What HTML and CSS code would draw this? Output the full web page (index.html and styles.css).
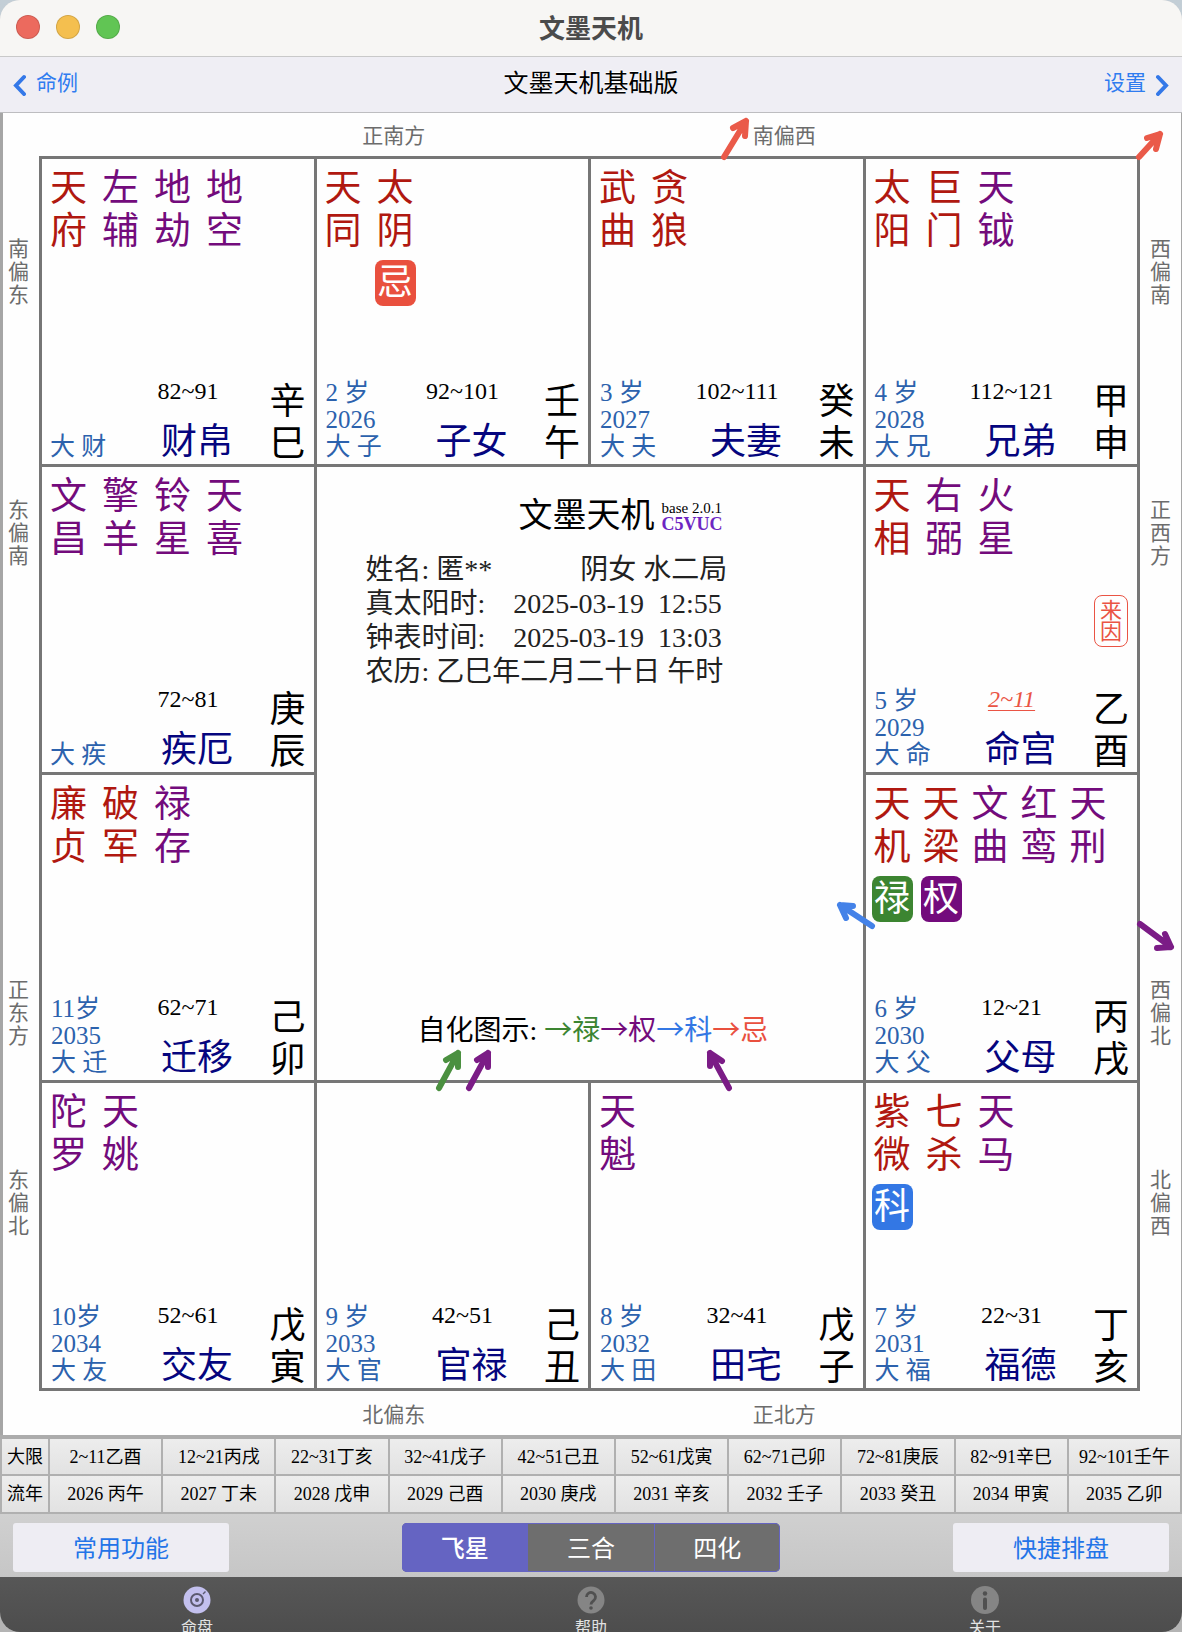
FILE: index.html
```html
<!DOCTYPE html>
<html lang="zh-CN">
<head>
<meta charset="utf-8">
<meta name="viewport" content="width=device-width, initial-scale=1">
<title>文墨天机</title>
<link rel="stylesheet" href="styles.css">
</head>
<body>
<div class="window">
  <header class="titlebar">
    <div class="lights"><span class="light close"></span><span class="light minimize"></span><span class="light expand"></span></div>
    <h1 class="window-title">文墨天机</h1>
  </header>

  <nav class="navbar">
    <a class="nav-link" href="#cases">
      <svg class="chevron" viewBox="0 0 16 22" aria-hidden="true"><path d="M12 3 4 11.500 12 20"/></svg>
      <span>命例</span>
    </a>
    <p class="nav-title">文墨天机基础版</p>
    <a class="nav-link nav-link-end" href="#settings">
      <span>设置</span>
      <svg class="chevron" viewBox="0 0 16 22" aria-hidden="true"><path d="M4 3 12 11.500 4 20"/></svg>
    </a>
  </nav>

  <main class="chart">
    <div class="edge edge-top"><span>正南方</span><span>南偏西</span></div>
    <div class="side side-left"><span>南偏东</span><span>东偏南</span><span>正东方</span><span>东偏北</span></div>

    <div class="board">
      <section class="palace">
        <ul class="stars"><li class="major">天府</li><li>左辅</li><li>地劫</li><li>地空</li></ul>
        <div class="foot">
          <div class="years years-short"><span>大 财</span></div>
          <div class="house"><span class="span">82~91</span><h2>财帛</h2></div>
          <div class="pillar"><span class="stem">辛巳</span></div>
        </div>
      </section>
      <section class="palace">
        <ul class="stars"><li class="major">天同</li><li class="major">太阴<b class="badge ji">忌</b></li></ul>
        <div class="foot">
          <div class="years"><span>2 岁</span><span>2026</span><span>大 子</span></div>
          <div class="house"><span class="span">92~101</span><h2>子女</h2></div>
          <div class="pillar"><span class="stem">壬午</span></div>
        </div>
      </section>
      <section class="palace">
        <ul class="stars"><li class="major">武曲</li><li class="major">贪狼</li></ul>
        <div class="foot">
          <div class="years"><span>3 岁</span><span>2027</span><span>大 夫</span></div>
          <div class="house"><span class="span">102~111</span><h2>夫妻</h2></div>
          <div class="pillar"><span class="stem">癸未</span></div>
        </div>
      </section>
      <section class="palace">
        <ul class="stars"><li class="major">太阳</li><li class="major">巨门</li><li>天钺</li></ul>
        <div class="foot">
          <div class="years"><span>4 岁</span><span>2028</span><span>大 兄</span></div>
          <div class="house"><span class="span">112~121</span><h2>兄弟</h2></div>
          <div class="pillar"><span class="stem">甲申</span></div>
        </div>
      </section>

      <section class="palace">
        <ul class="stars"><li>文昌</li><li>擎羊</li><li>铃星</li><li>天喜</li></ul>
        <div class="foot">
          <div class="years years-short"><span>大 疾</span></div>
          <div class="house"><span class="span">72~81</span><h2>疾厄</h2></div>
          <div class="pillar"><span class="stem">庚辰</span></div>
        </div>
      </section>
      <section class="center">
        <header class="brand">
          <h2 class="brand-name">文墨天机</h2>
          <p class="version">base 2.0.1<strong>C5VUC</strong></p>
        </header>
        <div class="profile">
          <p>姓名: 匿**<span class="pattern">阴女 水二局</span></p>
          <p>真太阳时:    2025-03-19  12:55</p>
          <p>钟表时间:    2025-03-19  13:03</p>
          <p>农历: 乙巳年二月二十日 午时</p>
        </div>
        <p class="legend">自化图示: <span class="c-lu">→禄</span><span class="c-quan">→权</span><span class="c-ke">→科</span><span class="c-ji">→忌</span></p>
      </section>
      <section class="palace">
        <ul class="stars"><li class="major">天相</li><li>右弼</li><li>火星</li></ul>
        <div class="foot">
          <div class="years"><span>5 岁</span><span>2029</span><span>大 命</span></div>
          <div class="house"><span class="span current">2~11</span><h2>命宫</h2></div>
          <div class="pillar"><span class="origin">来因</span><span class="stem">乙酉</span></div>
        </div>
      </section>

      <section class="palace">
        <ul class="stars"><li class="major">廉贞</li><li class="major">破军</li><li>禄存</li></ul>
        <div class="foot">
          <div class="years"><span>11岁</span><span>2035</span><span>大 迁</span></div>
          <div class="house"><span class="span">62~71</span><h2>迁移</h2></div>
          <div class="pillar"><span class="stem">己卯</span></div>
        </div>
      </section>
      <section class="palace">
        <ul class="stars stars-dense"><li class="major">天机<b class="badge lu">禄</b></li><li class="major">天梁<b class="badge quan">权</b></li><li>文曲</li><li>红鸾</li><li>天刑</li></ul>
        <div class="foot">
          <div class="years"><span>6 岁</span><span>2030</span><span>大 父</span></div>
          <div class="house"><span class="span">12~21</span><h2>父母</h2></div>
          <div class="pillar"><span class="stem">丙戌</span></div>
        </div>
      </section>

      <section class="palace">
        <ul class="stars"><li>陀罗</li><li>天姚</li></ul>
        <div class="foot">
          <div class="years"><span>10岁</span><span>2034</span><span>大 友</span></div>
          <div class="house"><span class="span">52~61</span><h2>交友</h2></div>
          <div class="pillar"><span class="stem">戊寅</span></div>
        </div>
      </section>
      <section class="palace">
        <ul class="stars"></ul>
        <div class="foot">
          <div class="years"><span>9 岁</span><span>2033</span><span>大 官</span></div>
          <div class="house"><span class="span">42~51</span><h2>官禄</h2></div>
          <div class="pillar"><span class="stem">己丑</span></div>
        </div>
      </section>
      <section class="palace">
        <ul class="stars"><li>天魁</li></ul>
        <div class="foot">
          <div class="years"><span>8 岁</span><span>2032</span><span>大 田</span></div>
          <div class="house"><span class="span">32~41</span><h2>田宅</h2></div>
          <div class="pillar"><span class="stem">戊子</span></div>
        </div>
      </section>
      <section class="palace">
        <ul class="stars"><li class="major">紫微<b class="badge ke">科</b></li><li class="major">七杀</li><li>天马</li></ul>
        <div class="foot">
          <div class="years"><span>7 岁</span><span>2031</span><span>大 福</span></div>
          <div class="house"><span class="span">22~31</span><h2>福德</h2></div>
          <div class="pillar"><span class="stem">丁亥</span></div>
        </div>
      </section>
    </div>

    <div class="side side-right"><span>西偏南</span><span>正西方</span><span>西偏北</span><span>北偏西</span></div>
    <div class="edge edge-bottom"><span>北偏东</span><span>正北方</span></div>

    <svg class="arrows" viewBox="3 113 1178 1322" preserveAspectRatio="none" aria-hidden="true">
      <g class="a-ji">
        <path d="M724 157 746 121M733 128 746 121 745 136"/>
        <path d="M1139 157 1160 134M1147 138 1160 134 1156 149"/>
      </g>
      <path class="a-ke" d="M872 926 840 905M853 906 840 905 846 918"/>
      <g class="a-quan">
        <path d="M1140 924 1171 947M1165 934 1171 947 1157 948"/>
        <path d="M469 1088 488 1053M477 1060 488 1053 488 1067"/>
        <path d="M729 1088 710 1053M710 1066 710 1053 722 1061"/>
      </g>
      <path class="a-lu" d="M439 1088 458 1053M446 1060 458 1053 458 1067"/>
    </svg>
  </main>

  <table class="periods">
    <tbody>
      <tr><th scope="row">大限</th><td>2~11乙酉</td><td>12~21丙戌</td><td>22~31丁亥</td><td>32~41戊子</td><td>42~51己丑</td><td>52~61戊寅</td><td>62~71己卯</td><td>72~81庚辰</td><td>82~91辛巳</td><td>92~101壬午</td></tr>
      <tr><th scope="row">流年</th><td>2026 丙午</td><td>2027 丁未</td><td>2028 戊申</td><td>2029 己酉</td><td>2030 庚戌</td><td>2031 辛亥</td><td>2032 壬子</td><td>2033 癸丑</td><td>2034 甲寅</td><td>2035 乙卯</td></tr>
    </tbody>
  </table>

  <div class="toolbar">
    <button class="action" type="button">常用功能</button>
    <div class="segments">
      <button class="segment active" type="button">飞星</button>
      <button class="segment" type="button">三合</button>
      <button class="segment" type="button">四化</button>
    </div>
    <button class="action" type="button">快捷排盘</button>
  </div>

  <footer class="tabbar">
    <a class="tab" href="#chart">
      <svg class="tab-icon" viewBox="0 0 28 28" aria-hidden="true"><circle cx="14" cy="14" r="13.500" fill="#c3c0ee"/><circle cx="14" cy="14" r="6" fill="none" stroke="#5c5a70" stroke-width="2"/><circle cx="14" cy="14" r="2" fill="#5c5a70"/><path d="M20 8l2.500-2.500" stroke="#5c5a70" stroke-width="1.500"/></svg>
      <span>命盘</span>
    </a>
    <a class="tab" href="#help">
      <svg class="tab-icon" viewBox="0 0 28 28" aria-hidden="true"><circle cx="14" cy="14" r="13.500" fill="#858585"/><path d="M9.500 11a4.500 4.500 0 1 1 7.200 3.600c-1.700 1.300-2.700 2-2.700 4" fill="none" stroke="#505050" stroke-width="2.800"/><circle cx="14" cy="22" r="1.800" fill="#505050"/></svg>
      <span>帮助</span>
    </a>
    <a class="tab" href="#about">
      <svg class="tab-icon" viewBox="0 0 28 28" aria-hidden="true"><circle cx="14" cy="14" r="14" fill="#858585"/><circle cx="14" cy="7.500" r="2.200" fill="#505050"/><path d="M14 13.500V22" stroke="#505050" stroke-width="4" stroke-linecap="round"/></svg>
      <span>关于</span>
    </a>
  </footer>
</div>
</body>
</html>
```
FILE: styles.css
```css
* { box-sizing: border-box; }

body, h1, h2, p, ul { margin: 0; padding: 0; }
h1, h2, strong, b { font-weight: inherit; }
a { color: inherit; text-decoration: none; }

body {
  background: linear-gradient(#c3ced6, #b4b4b4);
  font-family: "Liberation Serif", "Noto Sans CJK SC", serif;
}

.window {
  display: flex;
  flex-direction: column;
  height: 100vh;
  min-height: 1400px;
  overflow: hidden;
  border-radius: 20px;
  background: #cdcdcd;
}

/* window chrome */
.titlebar {
  flex: none;
  display: grid;
  grid-template-columns: 1fr auto 1fr;
  align-items: center;
  height: 57px;
  padding: 0 16px 2px;
  border-bottom: 1px solid #c9c9c9;
  background: #f7f6f4;
}
.lights { display: flex; gap: 16px; }
.light { width: 24px; height: 24px; border-radius: 50%; border: 1px solid #0002; }
.close { background: #ec6a5e; }
.minimize { background: #f4bf4f; }
.expand { background: #61c554; }
.window-title {
  color: #4b4b4b;
  font: bold 26px/34px "Noto Sans CJK SC", sans-serif;
}

.navbar {
  flex: none;
  display: grid;
  grid-template-columns: 1fr auto 1fr;
  align-items: center;
  height: 56px;
  padding: 0 12px 8px;
  border-bottom: 1px solid #bdbdc0;
  background: #efeef4;
  font-family: "Noto Sans CJK SC", sans-serif;
}
.nav-link {
  display: flex;
  align-items: center;
  gap: 8px;
  color: #2f7cf0;
  font-size: 21px;
  line-height: 30px;
}
.nav-link-end { justify-content: flex-end; }
.chevron { width: 16px; height: 22px; margin-top: 8px; fill: none; stroke: #3478e8; stroke-width: 4; stroke-linecap: round; }
.nav-title { font-size: 25px; line-height: 34px; text-shadow: 0 -1px 0 #fff; }

/* chart */
.chart {
  position: relative;
  flex: 1;
  display: grid;
  grid-template: 43px 1fr 44px / 36px 1fr 41px;
  border-left: 3px solid #a6a6a6;
  border-right: 1px solid #a6a6a6;
  background: #fefefe;
}
.edge {
  grid-column: 1 / -1;
  display: grid;
  grid-template-columns: repeat(3, 1fr);
  align-items: center;
  justify-items: center;
  padding-right: 6px;
  color: #6c6c6c;
  font-size: 21px;
  line-height: 24px;
}
.edge span { grid-area: 1 / 1 / 2 / 3; }
.edge span + span { grid-area: 1 / 2 / 2 / 4; }
.edge-top { padding-top: 2px; }
.edge-bottom { padding-top: 4px; }

.side {
  display: grid;
  grid-template-rows: 82fr auto 191fr auto 410fr auto 120fr auto 153fr;
  justify-content: center;
  color: #6c6c6c;
  font-size: 21px;
  line-height: 23px;
}
.side-left { padding-right: 5px; }
.side span { width: 21px; }
.side span:nth-child(1) { grid-row: 2; }
.side span:nth-child(2) { grid-row: 4; }
.side span:nth-child(3) { grid-row: 6; }
.side span:nth-child(4) { grid-row: 8; }

.board {
  display: grid;
  grid-template-columns: repeat(4, 1fr);
  grid-template-rows: repeat(4, 1fr);
  gap: 3px;
  padding: 3px;
  background: #767676;
}
.palace, .center {
  display: flex;
  flex-direction: column;
  justify-content: space-between;
  min-width: 0;
  background: #fefefe;
}
.palace { padding: 8px 8px 1px; }
.center { grid-area: 2 / 2 / 4 / 4; }

.stars {
  display: flex;
  gap: 15px;
  list-style: none;
  color: #730b7c;
  font-size: 37px;
  line-height: 43px;
}
.stars-dense { gap: 12px; }
.stars li { width: 37px; }
.major { color: #b01810; }
.badge {
  display: block;
  width: 41px;
  margin: 7px -2px 0;
  border-radius: 8px;
  color: #fff;
  font-size: 36px;
  line-height: 46px;
  text-align: center;
}
.ji { background: #e9503e; }
.lu { background: #3c8531; }
.quan { background: #730b7c; }
.ke { background: #3377e4; }

.foot {
  display: grid;
  grid-template-columns: 90px 1fr 36px;
  align-items: end;
}
.years {
  display: grid;
  padding: 0 0 3px 1px;
  color: #2c62ad;
  font-size: 25px;
  line-height: 27px;
}
.years-short { padding-left: 0; }
.span {
  display: block;
  width: 96px;
  margin-bottom: 16px;
  font-size: 24px;
  line-height: 27px;
  text-align: center;
}
.current {
  color: #ea5444;
  font-style: italic;
  text-decoration: underline 1px;
  text-underline-offset: 3px;
}
.house h2 { padding-left: 21px; color: #05057e; font-size: 36px; line-height: 42px; }
.pillar { display: grid; justify-items: center; margin-bottom: -2px; font-size: 36px; line-height: 42px; }
.stem { width: 36px; }
.origin {
  width: 34px;
  margin-bottom: 42px;
  padding: 4px 5px;
  border: 1px solid #ea5444;
  border-radius: 8px;
  color: #ea5444;
  font-size: 22px;
  line-height: 21px;
}

/* centre panel */
.center { padding: 28px 49px 31px; color: #222; }
.brand { display: flex; justify-content: center; align-items: center; gap: 7px; padding-left: 62px; color: #000; }
.brand-name { font-size: 34px; line-height: 42px; }
.version { display: grid; font-size: 15px; line-height: 16px; }
.version strong { color: #6d25c2; font-size: 18px; font-weight: bold; line-height: 17px; }
.profile { margin: 16px 0 auto; font-size: 28px; line-height: 34px; }
.profile p { white-space: pre; }
.pattern { margin-left: 88px; }
.legend { padding-left: 52px; color: #000; font-size: 28px; line-height: 36px; white-space: nowrap; }
.legend span { font-family: "Noto Sans CJK SC", sans-serif; }
.c-lu { color: #3c8531; }
.c-quan { color: #730b7c; }
.c-ke { color: #3377e4; }
.c-ji { color: #e9503e; }

.arrows {
  position: absolute;
  inset: 0;
  width: 100%;
  height: 100%;
  fill: none;
  stroke-width: 6;
  stroke-linecap: round;
  stroke-linejoin: round;
  pointer-events: none;
}
.a-ji { stroke: #ea5a49; }
.a-ke { stroke: #4482e8; }
.a-quan { stroke: #7b1c86; }
.a-lu { stroke: #4b9040; }

/* period table */
.periods {
  flex: none;
  width: 100%;
  border-collapse: collapse;
  table-layout: fixed;
  font-size: 18px;
  line-height: 24px;
}
.periods th, .periods td {
  height: 38px;
  padding: 0;
  border: 2px solid #b0b0b0;
  background: linear-gradient(#ededed, #e2e2e2);
  font-weight: normal;
  text-align: center;
  white-space: nowrap;
}
.periods tr:first-child > * { border-top: 4px solid #acacac; }
.periods th { width: 48px; }

/* toolbar */
.toolbar {
  flex: none;
  display: flex;
  justify-content: space-between;
  padding: 9px 13px 5px;
  background: linear-gradient(#d0d0d0, #c6c6c6);
}
.toolbar button {
  height: 49px;
  padding: 0 0 2px;
  border: 0;
  font: 24px/34px "Noto Sans CJK SC", sans-serif;
}
.toolbar .action { width: 216px; border-radius: 3px; background: #eeedf3; color: #2374e8; }
.segments {
  display: flex;
  width: 378px;
  overflow: hidden;
  border-radius: 5px;
  background: #6e6e6e;
  box-shadow: inset 0 0 0 1px #6564c2;
}
.toolbar .segment { flex: 1; background: none; color: #fff; }
.toolbar .segment + .segment { border-left: 1px solid #6564c2; }
.toolbar .active { background: #6564c2; font-weight: 500; }

/* tab bar */
.tabbar {
  flex: none;
  display: grid;
  grid-template-columns: repeat(3, 1fr);
  height: 55px;
  overflow: hidden;
  background: linear-gradient(#575757, #4d4d4d);
}
.tab {
  display: flex;
  flex-direction: column;
  align-items: center;
  gap: 2px;
  padding-top: 9px;
  color: #e2e2e2;
  font: 16px/20px "Noto Sans CJK SC", sans-serif;
}
.tab-icon { flex: none; width: 28px; height: 28px; }
```
